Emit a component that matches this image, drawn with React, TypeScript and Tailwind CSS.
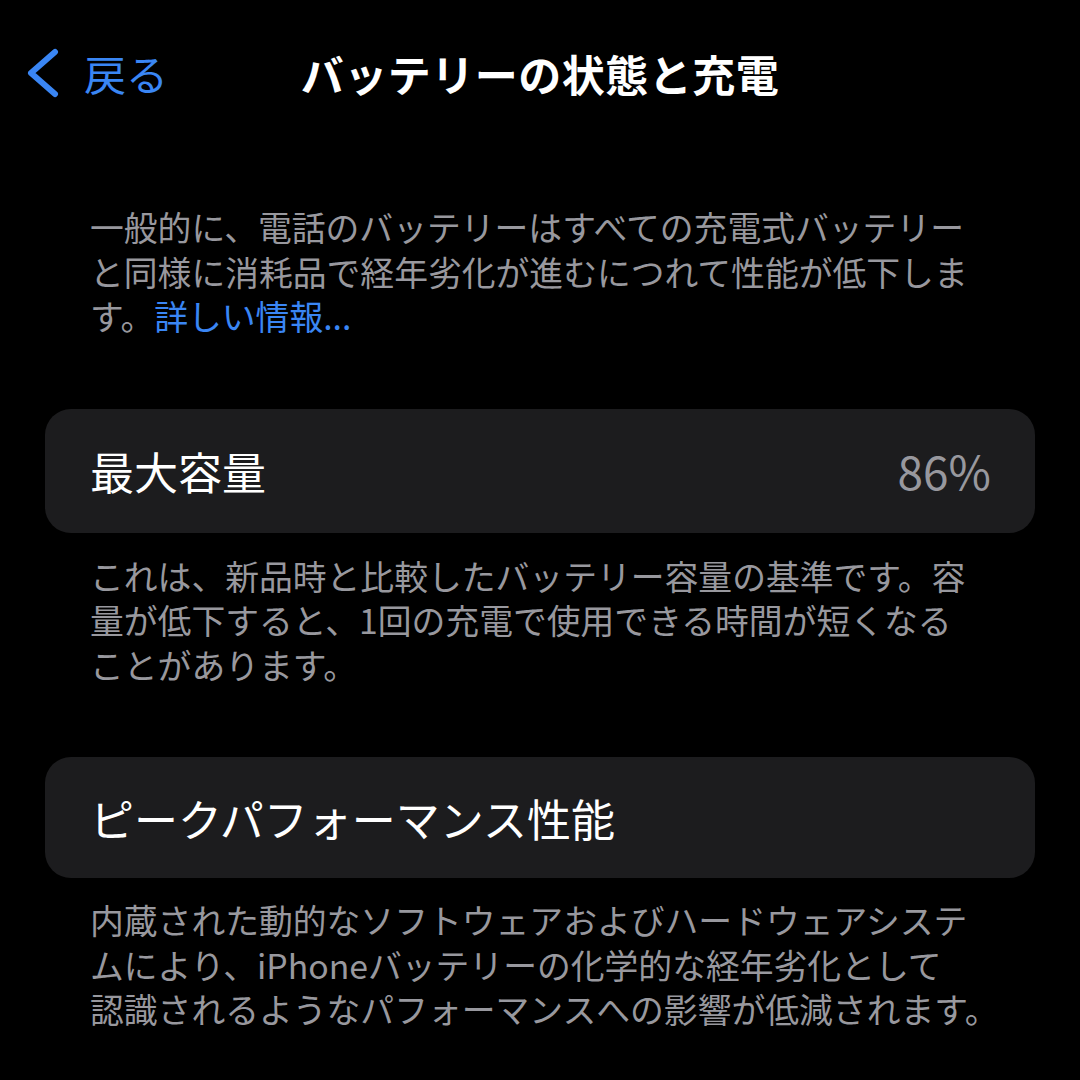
import React from "react";

const jp = { fontFamily: '"Noto Sans CJK JP", "Noto Sans", sans-serif' };

function Footnote({ lines }: { lines: React.ReactNode[] }) {
  return (
    <div className="px-[90px] text-[33.8px] leading-[44.5px] text-[#98989e]">
      {lines.map((l, i) => (
        <div key={i} className="whitespace-nowrap">
          {l}
        </div>
      ))}
    </div>
  );
}

function Card({ title, value, h }: { title: string; value?: string; h: string }) {
  return (
    <div className={`mx-[45px] ${h} rounded-[26px] bg-[#1c1c1e] pl-[45px] pr-[44px] flex items-center justify-between`}>
      <span className="text-[44px] text-white">{title}</span>
      {value && <span className="text-[46px] text-[#98989e]">{value}</span>}
    </div>
  );
}

export default function App() {
  return (
    <div className="w-[1080px] h-[1080px] bg-black overflow-hidden" style={jp}>
      {/* ===== HEADER ===== */}
      <div className="h-[146px] grid grid-cols-[1fr_auto_1fr] items-center">
        <div className="flex items-center pl-[24px] gap-[22px] text-[#3a86f4]">
          <svg width="38" height="50" viewBox="0 0 38 50" fill="none">
            <path d="M31 4 L7 25 L31 46" stroke="currentColor" strokeWidth="6" strokeLinecap="round" strokeLinejoin="round" />
          </svg>
          <span className="text-[42px] leading-none">戻る</span>
        </div>
        <h1 className="text-[43px] font-bold text-white leading-none tracking-[0.5px]">バッテリーの状態と充電</h1>
        <div />
      </div>

      {/* ===== INTRO ===== */}
      <div className="mt-[59px]">
        <Footnote
          lines={[
            "一般的に、電話のバッテリーはすべての充電式バッテリー",
            "と同様に消耗品で経年劣化が進むにつれて性能が低下しま",
            <>
              す。<span className="text-[#3a86f4]">詳しい情報...</span>
            </>,
          ]}
        />
      </div>

      {/* ===== MAX CAPACITY ===== */}
      <div className="mt-[70px]">
        <Card title="最大容量" value="86%" h="h-[124px]" />
      </div>
      <div className="mt-[21px]">
        <Footnote
          lines={[
            "これは、新品時と比較したバッテリー容量の基準です。容",
            "量が低下すると、1回の充電で使用できる時間が短くなる",
            "ことがあります。",
          ]}
        />
      </div>

      {/* ===== PEAK PERFORMANCE ===== */}
      <div className="mt-[70px]">
        <Card title="ピークパフォーマンス性能" h="h-[121px]" />
      </div>
      <div className="mt-[20px]">
        <Footnote
          lines={[
            "内蔵された動的なソフトウェアおよびハードウェアシステ",
            "ムにより、iPhoneバッテリーの化学的な経年劣化として",
            "認識されるようなパフォーマンスへの影響が低減されます。",
          ]}
        />
      </div>
    </div>
  );
}
